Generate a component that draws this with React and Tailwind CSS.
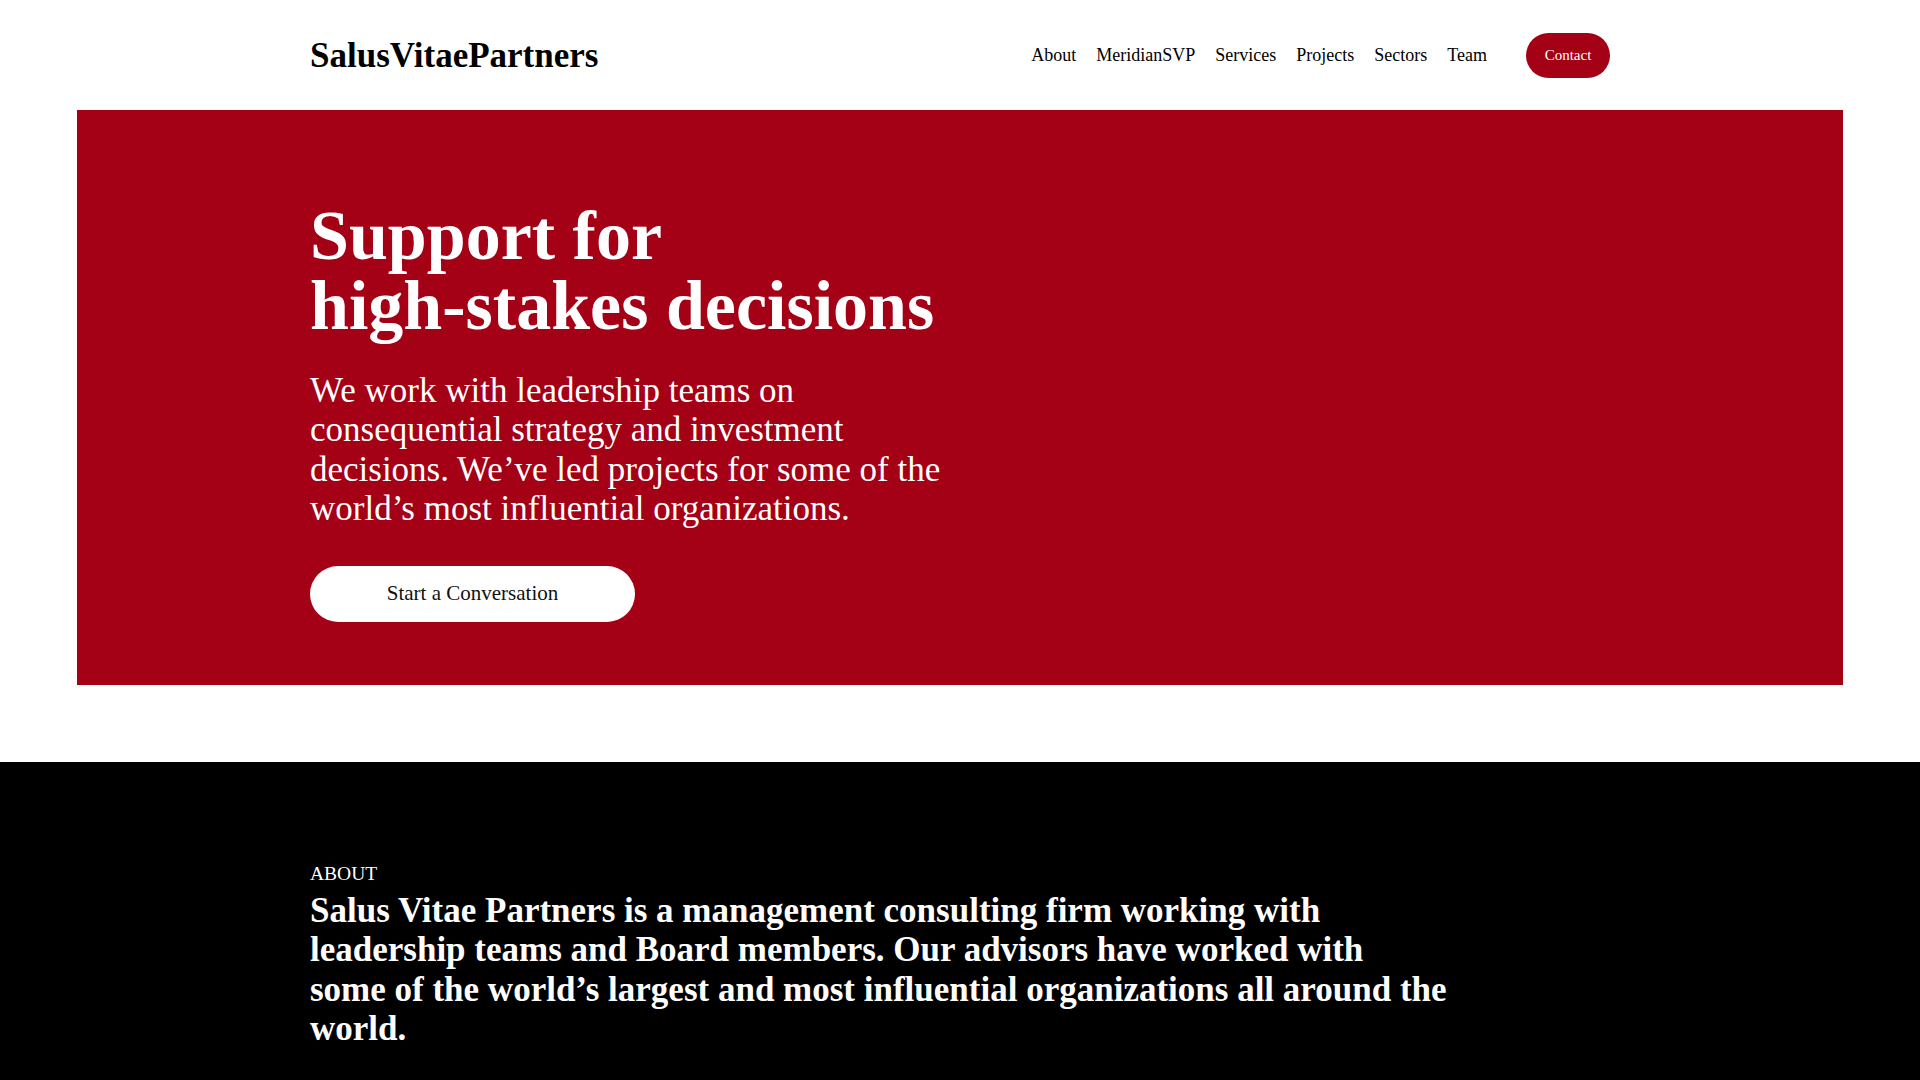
import React from "react";

const navItems = ["About", "MeridianSVP", "Services", "Projects", "Sectors", "Team"];

export default function App() {
  return (
    <div className="min-h-screen bg-white font-['Liberation_Serif',serif] text-black">
      <header className="mx-auto flex h-[110px] w-[1300px] items-center justify-between">
        <a href="#" className="mt-[3px] text-[35px] font-bold leading-[1.107] text-black">
          SalusVitaePartners
        </a>
        <div className="flex items-center">
          <nav className="mt-[2px] flex items-center gap-[20px] text-[18px] text-black">
            {navItems.map((item) => (
              <a key={item} href="#" className="leading-[1.107]">
                {item}
              </a>
            ))}
          </nav>
          <a
            href="#"
            className="ml-[39px] flex h-[45px] w-[84px] items-center justify-center rounded-full bg-[#a40016] text-[15px] text-white"
          >
            Contact
          </a>
        </div>
      </header>

      <section className="mx-auto w-[92%] bg-[#a40016]">
        <div className="mx-auto w-[1300px] pb-[63px] pt-[91px] text-white">
          <h1 className="text-[70px] font-bold leading-[70px]">
            Support for
            <br />
            high-stakes decisions
          </h1>
          <p className="mt-[30px] w-[650px] text-[35px] leading-[39.4px]">
            We work with leadership teams on consequential strategy and investment decisions. We’ve
            led projects for some of the world’s most influential organizations.
          </p>
          <a
            href="#"
            className="mt-[37px] flex h-[56px] w-[325px] items-center justify-center rounded-full bg-white text-[21px] text-[#111]"
          >
            Start a Conversation
          </a>
        </div>
      </section>

      <section className="mt-[77px] bg-black pb-[120px] pt-[100px] text-white">
        <div className="mx-auto w-[1300px]">
          <div className="text-[19.5px] leading-[24px]">ABOUT</div>
          <p className="mt-[5px] w-[1160px] text-[35px] font-bold leading-[39.6px]">
            Salus Vitae Partners is a management consulting firm working with
            <br />
            leadership teams and Board members. Our advisors have worked with
            <br />
            some of the world’s largest and most influential organizations all around the
            <br />
            world.
          </p>
        </div>
      </section>
    </div>
  );
}
